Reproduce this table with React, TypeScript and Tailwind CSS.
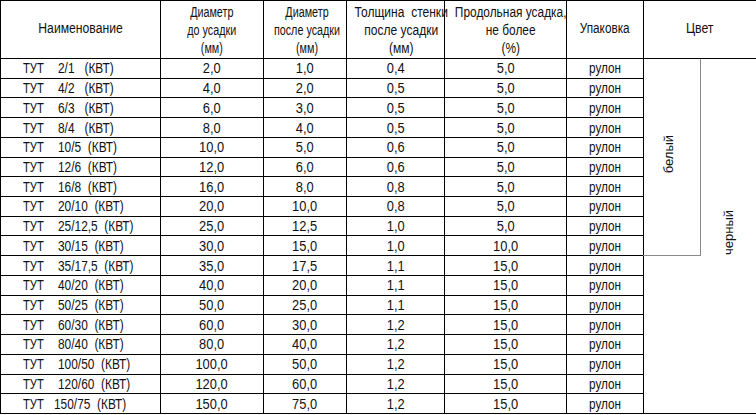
import React from "react";

const rows: [string, string, string, string, string][] = [
  ["2/1", "2,0", "1,0", "0,4", "5,0"],
  ["4/2", "4,0", "2,0", "0,5", "5,0"],
  ["6/3", "6,0", "3,0", "0,5", "5,0"],
  ["8/4", "8,0", "4,0", "0,5", "5,0"],
  ["10/5", "10,0", "5,0", "0,6", "5,0"],
  ["12/6", "12,0", "6,0", "0,6", "5,0"],
  ["16/8", "16,0", "8,0", "0,8", "5,0"],
  ["20/10", "20,0", "10,0", "0,8", "5,0"],
  ["25/12,5", "25,0", "12,5", "1,0", "5,0"],
  ["30/15", "30,0", "15,0", "1,0", "10,0"],
  ["35/17,5", "35,0", "17,5", "1,1", "15,0"],
  ["40/20", "40,0", "20,0", "1,1", "15,0"],
  ["50/25", "50,0", "25,0", "1,1", "15,0"],
  ["60/30", "60,0", "30,0", "1,2", "15,0"],
  ["80/40", "80,0", "40,0", "1,2", "15,0"],
  ["100/50", "100,0", "50,0", "1,2", "15,0"],
  ["120/60", "120,0", "60,0", "1,2", "15,0"],
  ["150/75", "150,0", "75,0", "1,2", "15,0"],
];

const cell = "border border-black text-center align-middle p-0 leading-none";
const head = "border border-black text-center align-middle p-0 font-normal leading-[18px]";

export default function App() {
  return (
    <div
      className="w-[756px] h-[415px] bg-white text-[#111] overflow-hidden"
      style={{ fontFamily: '"Liberation Sans", Arial, sans-serif' }}
    >
      <table className="table-fixed border-collapse w-[756px] text-[14px]">
        <colgroup>
          <col className="w-[160px]" />
          <col className="w-[103px]" />
          <col className="w-[83px]" />
          <col className="w-[98px]" />
          <col className="w-[122px]" />
          <col className="w-[77px]" />
          <col className="w-[57px]" />
          <col className="w-[56px]" />
        </colgroup>
        <thead>
          <tr className="h-[58px]">
            <th className={head}>
              <span className="inline-block scale-x-[0.87] whitespace-nowrap mb-[4px]">Наименование</span>
            </th>
            <th className={head}>
              <span className="inline-block scale-x-[0.77] whitespace-nowrap leading-[18px]">
                Диаметр<br />до усадки<br />(мм)
              </span>
            </th>
            <th className={head}>
              <span className="inline-block scale-x-[0.77] whitespace-nowrap leading-[18px]">
                Диаметр<br />после усадки<br />(мм)
              </span>
            </th>
            <th className={head}>
              <span className="inline-block scale-x-[0.86] whitespace-pre leading-[18px]">
                Толщина  стенки<br />после усадки<br />(мм)
              </span>
            </th>
            <th className={head}>
              <span className="inline-block scale-x-[0.85] whitespace-nowrap leading-[18px]">
                Продольная усадка,<br />не более<br />(%)
              </span>
            </th>
            <th className={head}>
              <span className="inline-block scale-x-[0.84] whitespace-nowrap mb-[4px]">Упаковка</span>
            </th>
            <th colSpan={2} className={head}>
              <span className="inline-block scale-x-[0.88] whitespace-nowrap mb-[4px]">Цвет</span>
            </th>
          </tr>
        </thead>
        <tbody>
          {rows.map((r, i) => {
            const short = r[0].length <= 3;
            const last = r[0] === "150/75";
            return (
              <tr key={i} className="h-[19.72px]">
                <td className={`${cell} text-left whitespace-nowrap`}>
                  <span className={`inline-block ${last ? "w-[31px]" : "w-[35px]"} ml-[22px]`}>
                    <span className="inline-block origin-left scale-x-[0.8]">ТУТ</span>
                  </span>
                  <span className="inline-block origin-left scale-x-[0.85] whitespace-pre">
                    {short ? `${r[0]}   (КВТ)` : `${r[0]}  (КВТ)`}
                  </span>
                </td>
                {[r[1], r[2], r[3], r[4]].map((v, j) => (
                  <td key={j} className={cell}>
                    <span className="inline-block scale-x-[0.92]">{v}</span>
                  </td>
                ))}
                <td className={cell}>
                  <span className="inline-block scale-x-[0.84]">рулон</span>
                </td>
                {i === 0 && (
                  <td
                    rowSpan={10}
                    className="border-l border-l-black border-r border-r-[#8a8a8a] border-b border-b-[#8a8a8a] border-t border-t-black p-0 text-center align-middle"
                  >
                    <span className="inline-block [writing-mode:vertical-rl] rotate-180 text-[13px] mr-[6px]">белый</span>
                  </td>
                )}
                {i === 0 && (
                  <td
                    rowSpan={18}
                    className="border-r border-r-black border-b border-b-black border-t border-t-black p-0 text-center align-middle"
                  >
                    <span className="inline-block [writing-mode:vertical-rl] rotate-180 text-[13px]">черный</span>
                  </td>
                )}
                {i === 10 && (
                  <td rowSpan={8} className="border-l border-l-black border-b border-b-black p-0"></td>
                )}
              </tr>
            );
          })}
        </tbody>
      </table>
    </div>
  );
}
